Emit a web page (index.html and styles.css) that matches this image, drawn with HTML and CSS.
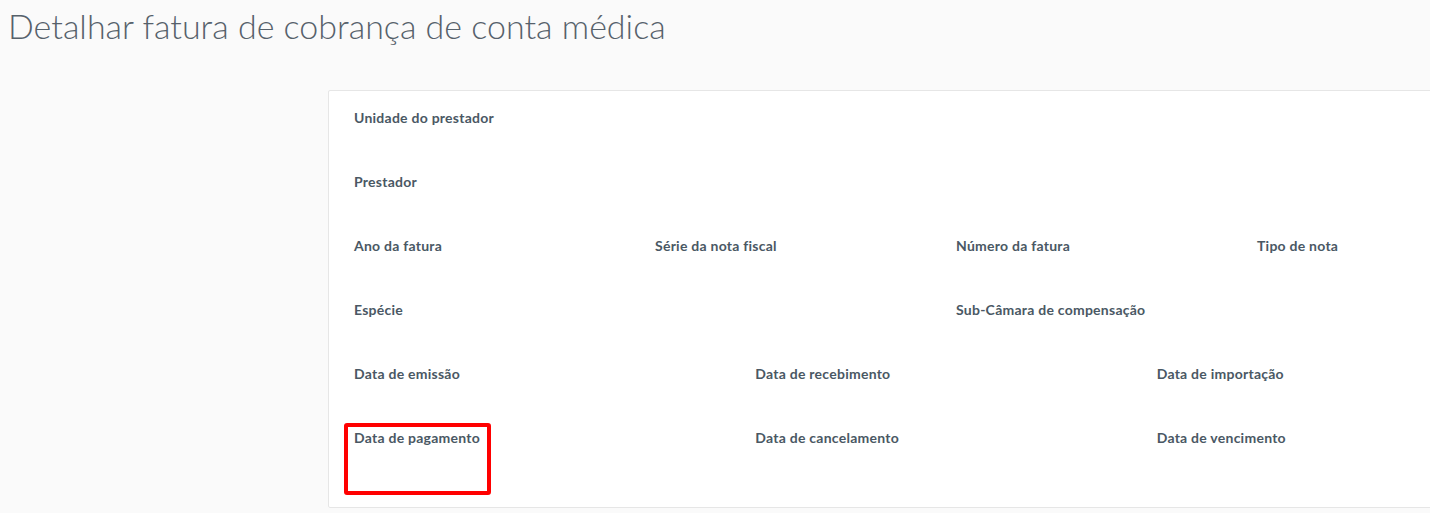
FILE: index.html
```html
<!DOCTYPE html>
<html lang="pt-BR">
<head>
  <meta charset="UTF-8" />
  <meta name="viewport" content="width=device-width, initial-scale=1.0" />
  <title>Detalhar fatura</title>
  <link rel="stylesheet" href="styles.css">
</head>
<body>
  <h1 class="page-title">Detalhar fatura de cobrança de conta médica</h1>

  <section class="card">
    <div class="row">
      <div class="field span-12">Unidade do prestador</div>
    </div>
    <div class="row">
      <div class="field span-12">Prestador</div>
    </div>
    <div class="row">
      <div class="field span-3">Ano da fatura</div>
      <div class="field span-3">Série da nota fiscal</div>
      <div class="field span-3">Número da fatura</div>
      <div class="field span-3">Tipo de nota</div>
    </div>
    <div class="row">
      <div class="field span-6">Espécie</div>
      <div class="field span-6">Sub-Câmara de compensação</div>
    </div>
    <div class="row">
      <div class="field span-4">Data de emissão</div>
      <div class="field span-4">Data de recebimento</div>
      <div class="field span-4">Data de importação</div>
    </div>
    <div class="row">
      <div class="field span-4 highlight">Data de pagamento</div>
      <div class="field span-4">Data de cancelamento</div>
      <div class="field span-4">Data de vencimento</div>
    </div>
  </section>
</body>
</html>
```

FILE: styles.css
```css
* { box-sizing: border-box; margin: 0; padding: 0; }
html { overflow: hidden; }
body { font-family: 'Lato', sans-serif; background-color: #fafafa; color: #4a5864; }

.page-title { font-weight: 300; font-size: 34px; line-height: 50px; color: #56616b; padding: 1px 0 0 8px; }

.card { background: #fff; border: 1px solid #e6e6e6; border-radius: 2px; margin: 39px 0 0 328px; width: 1260px; padding: 10px 15px 22px; }
.row { display: grid; grid-template-columns: repeat(12, 1fr); width: 1204px; height: 64px; }
.field { position: relative; font-size: 14px; font-weight: 700; line-height: 18px; letter-spacing: 0.25px; padding: 8px 0 0 10px; white-space: nowrap; }
.span-12 { grid-column: span 12; }
.span-6 { grid-column: span 6; }
.span-4 { grid-column: span 4; }
.span-3 { grid-column: span 3; }

.highlight::after { content: ''; position: absolute; left: 0; top: 2px; width: 139px; height: 64px; border: 4px solid #ff0000; border-radius: 3px; }
```
